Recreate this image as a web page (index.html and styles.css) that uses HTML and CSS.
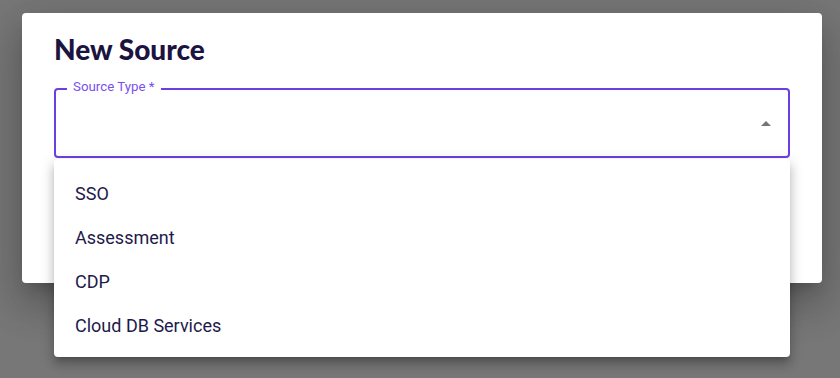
FILE: index.html
```html
<!DOCTYPE html>
<html>
<head>
<meta charset="utf-8">
<link rel="stylesheet" href="styles.css">
</head>
<body>
<div class="dialog">
  <h2 class="title">New Source</h2>
  <div class="field">
    <span class="label">Source Type *</span>
    <svg class="arrow" width="10" height="5" viewBox="0 0 10 5"><path d="M0 5 L5 0 L10 5 Z" fill="#757575"/></svg>
  </div>
</div>
<ul class="menu">
  <li class="item">SSO</li>
  <li class="item">Assessment</li>
  <li class="item">CDP</li>
  <li class="item">Cloud DB Services</li>
</ul>
</body>
</html>
```
FILE: styles.css
```css
html, body {
  margin: 0;
  padding: 0;
}
body {
  width: 840px;
  height: 378px;
  background: #777777;
  font-family: Roboto, "Liberation Sans", sans-serif;
  overflow: hidden;
  position: relative;
}
.dialog {
  box-sizing: border-box;
  margin: 13px 0 0 22px;
  width: 800px;
  height: 270px;
  background: #fff;
  border-radius: 4px;
  padding: 20px 32px 0 32px;
  box-shadow: 0 11px 15px -7px rgba(0,0,0,0.2), 0 24px 38px 3px rgba(0,0,0,0.14), 0 9px 46px 8px rgba(0,0,0,0.12);
}
.title {
  margin: 0;
  font-family: Lato, "Noto Sans", sans-serif;
  font-weight: 900;
  font-size: 28px;
  line-height: 32px;
  color: #1b1440;
  letter-spacing: 0;
}
.field {
  position: relative;
  box-sizing: border-box;
  margin-top: 23px;
  height: 70px;
  border: 2px solid #6d3fe3;
  border-radius: 4px;
  display: flex;
  align-items: center;
  justify-content: flex-end;
  padding-right: 17px;
}
.label {
  position: absolute;
  top: -11px;
  left: 11px;
  padding: 0 6px;
  background: #fff;
  color: #7a4ff0;
  font-size: 13.3px;
  line-height: 16px;
}
.arrow {
  display: block;
}
.menu {
  position: absolute;
  top: 159px;
  left: 54px;
  width: 736px;
  height: 198px;
  box-sizing: border-box;
  margin: 0;
  padding: 12px 0 8px;
  list-style: none;
  background: #fff;
  border-radius: 4px;
  box-shadow: 0 5px 5px -3px rgba(0,0,0,0.2), 0 8px 10px 1px rgba(0,0,0,0.14), 0 3px 14px 2px rgba(0,0,0,0.12);
}
.item {
  height: 44px;
  display: flex;
  align-items: center;
  padding: 0 21px;
  font-size: 18px;
  color: #1e1a4b;
}
```
